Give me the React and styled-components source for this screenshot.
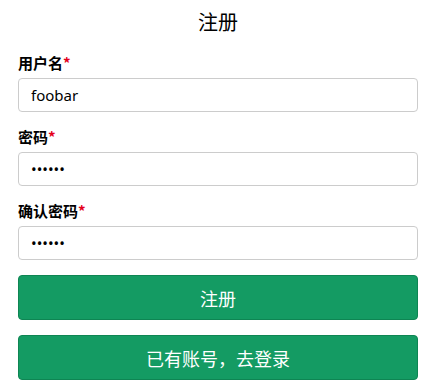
import React from 'react';
import styled, { createGlobalStyle } from 'styled-components';

const GlobalStyle = createGlobalStyle`
  html, body {
    margin: 0;
    padding: 0;
    background: #fff;
    font-family: "Noto Sans", "Noto Sans CJK SC", sans-serif;
    color: #000;
  }
  * { box-sizing: border-box; }
`;

const Page = styled.div`
  width: 400px;
  margin: 0 0 0 18px;
  padding-top: 8px;
`;

const Title = styled.h2`
  margin: 0 0 17px;
  font-size: 20px;
  line-height: 28px;
  font-weight: 400;
  text-align: center;
  font-family: "Noto Sans CJK SC", sans-serif;
`;

const FormGroup = styled.div`
  margin-bottom: 15px;
`;

const Label = styled.label`
  display: block;
  margin-bottom: 5px;
  font-size: 15px;
  line-height: 20px;
  font-weight: 700;
  font-family: "Noto Sans CJK SC", sans-serif;
`;

const Required = styled.span`
  color: #e4001b;
`;

const Input = styled.input`
  display: block;
  width: 100%;
  height: 34px;
  padding: 6px 12px;
  font-size: 15px;
  font-family: "Noto Sans", "Noto Sans CJK SC", sans-serif;
  color: #000;
  border: 1px solid #ccc;
  border-radius: 4px;
  outline: none;
  background: #fff;
`;

const Button = styled.button`
  display: block;
  width: 100%;
  height: 45px;
  margin-top: ${p => p.$gap || 0}px;
  font-size: 18px;
  font-family: "Noto Sans CJK SC", sans-serif;
  color: #fff;
  background: #149b63;
  border: 1px solid #0e8553;
  border-radius: 4px;
  cursor: pointer;
`;

const Field = ({ label, type, value }) => (
  <FormGroup>
    <Label>
      {label}
      <Required>*</Required>
    </Label>
    <Input type={type} defaultValue={value} />
  </FormGroup>
);

export default function App() {
  return (
    <Page>
      <GlobalStyle />
      <Title>注册</Title>
      <Field label="用户名" type="text" value="foobar" />
      <Field label="密码" type="password" value="123456" />
      <Field label="确认密码" type="password" value="123456" />
      <Button $gap={2}>注册</Button>
      <Button $gap={15}>已有账号，去登录</Button>
    </Page>
  );
}
